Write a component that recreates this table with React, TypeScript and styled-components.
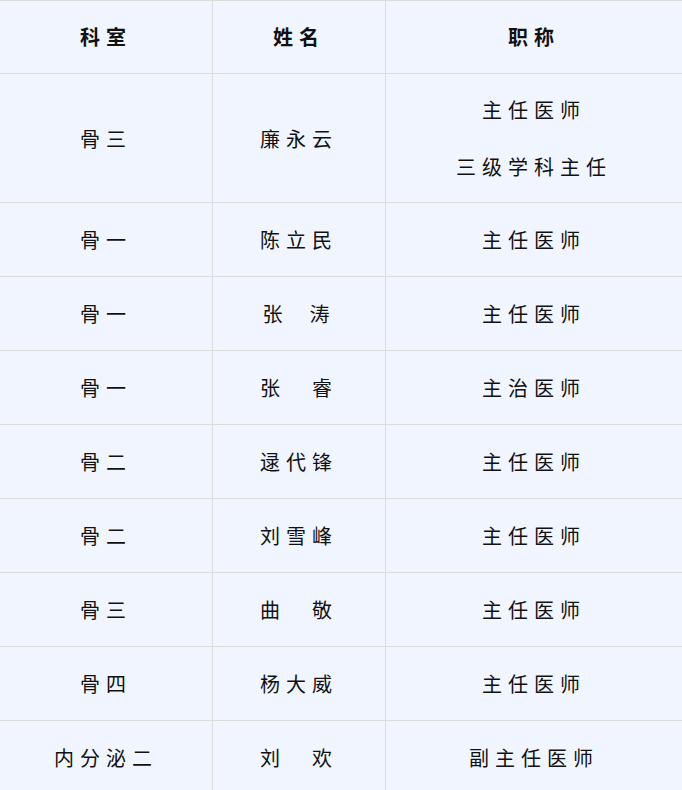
import styled, { createGlobalStyle } from "styled-components"

const GlobalStyle = createGlobalStyle`
    body {
        margin: 0;
        background: #f0f5ff;
        font-family: "Noto Sans CJK SC", "Noto Sans", sans-serif;
    }
`

const Table = styled.div`
    display: grid;
    grid-template-columns: 213px 173px 1fr;
    width: 682px;
    background: #f0f5ff;
    border-top: 1px solid #dcdcdc;
`

const Cell = styled.div<{ $head?: boolean; $last?: boolean; $multi?: boolean }>`
    display: flex;
    flex-direction: column;
    align-items: center;
    justify-content: center;
    gap: 30px;
    padding: ${p => (p.$head ? "22px 0 23px" : p.$multi ? "22px 0" : "23px 0")};
    border-bottom: 1px solid #dcdcdc;
    border-right: ${p => (p.$last ? "none" : "1px solid #dcdcdc")};
    color: #111;
    font-size: 20px;
    font-weight: ${p => (p.$head ? 700 : 400)};
    line-height: 27px;
    letter-spacing: 6px;
    white-space: pre;
`

const Line = styled.span`
    display: block;
`

const rows = [
    { dept: "骨三", name: "廉永云", titles: ["主任医师", "三级学科主任"] },
    { dept: "骨一", name: "陈立民", titles: ["主任医师"] },
    { dept: "骨一", name: "张\u00a0\u00a0涛", titles: ["主任医师"] },
    { dept: "骨一", name: "张\u3000睿", titles: ["主治医师"] },
    { dept: "骨二", name: "逯代锋", titles: ["主任医师"] },
    { dept: "骨二", name: "刘雪峰", titles: ["主任医师"] },
    { dept: "骨三", name: "曲\u3000敬", titles: ["主任医师"] },
    { dept: "骨四", name: "杨大威", titles: ["主任医师"] },
    { dept: "内分泌二", name: "刘\u3000欢", titles: ["副主任医师"] },
]

export default function App() {
    return (
        <>
            <GlobalStyle />
            <Table>
                <Cell $head>科室</Cell>
                <Cell $head>姓名</Cell>
                <Cell $head $last>职称</Cell>
                {rows.map((row, i) => {
                    const multi = row.titles.length > 1
                    return (
                        <>
                            <Cell key={`d${i}`} $multi={multi}>{row.dept}</Cell>
                            <Cell key={`n${i}`} $multi={multi}>{row.name}</Cell>
                            <Cell key={`t${i}`} $multi={multi} $last>
                                {row.titles.map(t => (
                                    <Line key={t}>{t}</Line>
                                ))}
                            </Cell>
                        </>
                    )
                })}
            </Table>
        </>
    )
}
